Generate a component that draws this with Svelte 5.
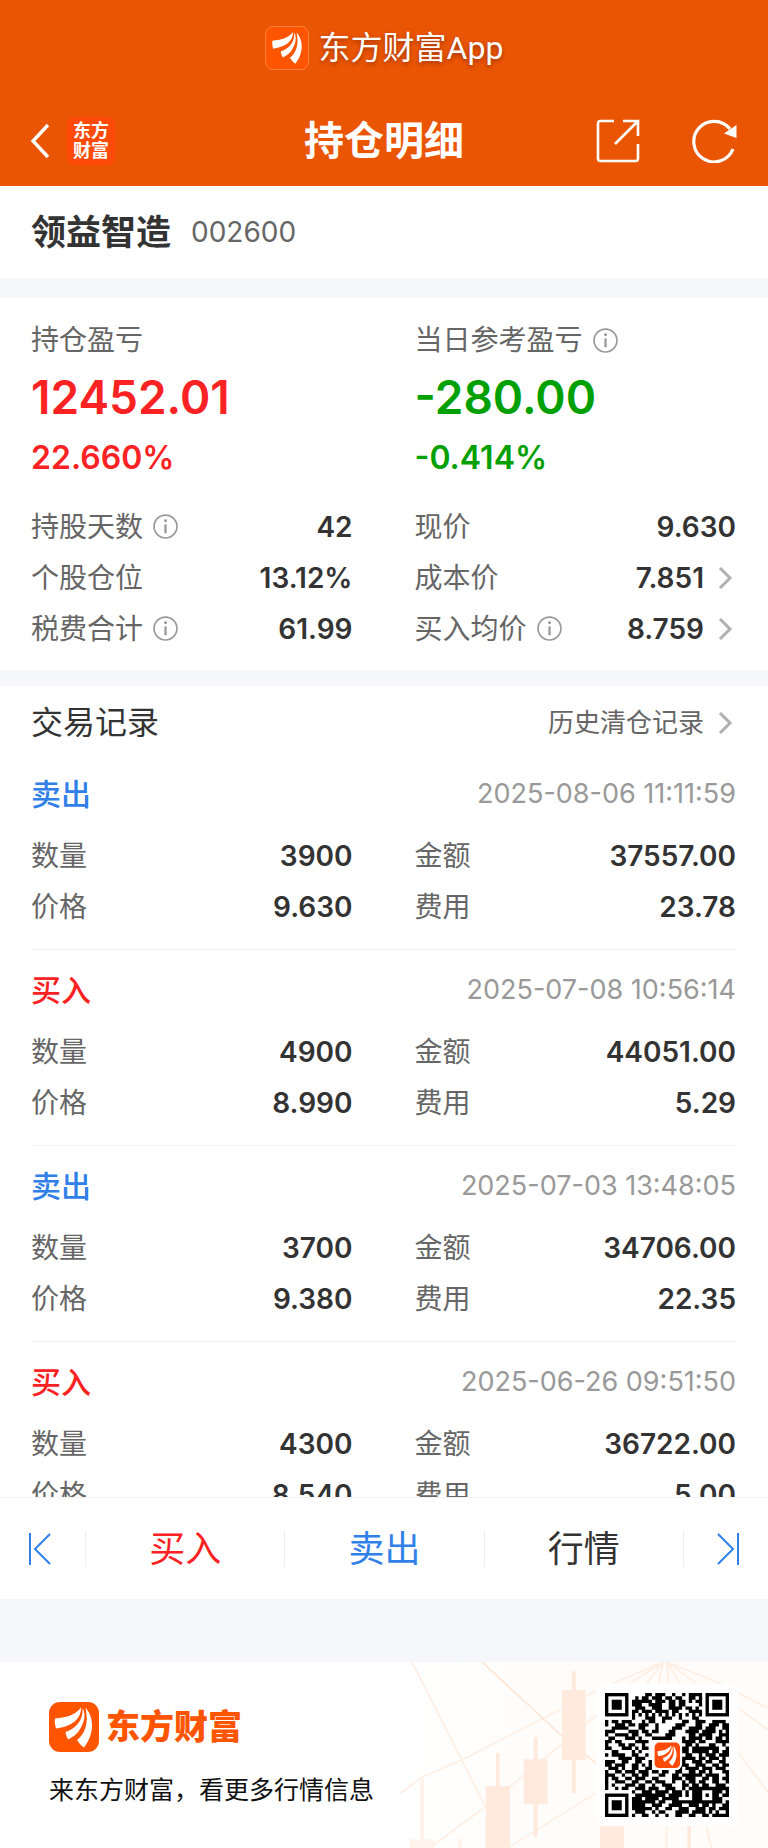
<script lang="ts">
  interface Trade {
    side: "buy" | "sell"
    time: string
    qty: string
    amount: string
    price: string
    fee: string
  }

  const sideText = { buy: "买入", sell: "卖出" }

  const stats = [
    { label: "持股天数", value: "42", info: true, more: false },
    { label: "现价", value: "9.630", info: false, more: false },
    { label: "个股仓位", value: "13.12%", info: false, more: false },
    { label: "成本价", value: "7.851", info: false, more: true },
    { label: "税费合计", value: "61.99", info: true, more: false },
    { label: "买入均价", value: "8.759", info: true, more: true },
  ]

  const trades: Trade[] = [
    { side: "sell", time: "2025-08-06 11:11:59", qty: "3900", amount: "37557.00", price: "9.630", fee: "23.78" },
    { side: "buy", time: "2025-07-08 10:56:14", qty: "4900", amount: "44051.00", price: "8.990", fee: "5.29" },
    { side: "sell", time: "2025-07-03 13:48:05", qty: "3700", amount: "34706.00", price: "9.380", fee: "22.35" },
    { side: "buy", time: "2025-06-26 09:51:50", qty: "4300", amount: "36722.00", price: "8.540", fee: "5.00" },
  ]

  const qr = [
    "1111111000001101110010010111100111111",
    "1000001001011011101101100110110100001",
    "1011101011111101110110110101100101101",
    "1011101011100111100110110000110101101",
    "1011101001110011100111101101000101101",
    "1000001011011101111011000111100100001",
    "1111111010101010101010101010101111111",
    "0000000010001110011100100011000000000",
    "1011011100010110010000011001110011110",
    "1001110110111001000001110001100111011",
    "0011111000110001000011100111101110011",
    "1110000111011011000110001111011110101",
    "1001111011001100001110000110111100111",
    "0110001110100011111100010111101101101",
    "1101100001111000000000011110110001111",
    "1000110110010000000000001101000110010",
    "1100011101011000000000111011111111001",
    "0011000010100000000000011011111011011",
    "1011110011001000000000101100101110111",
    "0000111101110000000000011110110111010",
    "1110011001100100000000110011101100110",
    "1101110011010100000000111001110011011",
    "0111010011001100000000101111011101110",
    "1001101110111011011001100110110100011",
    "1110010011011000110011011111101111001",
    "1011001101110011000011101110011011011",
    "1001110011001101110010010110110011001",
    "1010001110110010011100011011011001110",
    "1001011001110111001110010111111111111",
    "0000000010011101111011101011100011101",
    "1111111001111111110111101011101011011",
    "1000001011101111011111000011100011100",
    "1011101011111110110011111111111111101",
    "1011101011110011100111100111011010011",
    "1011101011111101001100111001110110111",
    "1000001001110010110001111011110101001",
    "1111111010011001001001100110011011111",
  ]

  // The corner finders are drawn over whatever the rows hold there.
  const finders = [
    [0, 0],
    [30, 0],
    [0, 30],
  ]

  const qrPath = qr
    .map((row, y) => [...row.matchAll(/1+/g)].map((m) => `M${m.index} ${y}h${m[0].length}v1h-${m[0].length}z`).join(""))
    .join("")
</script>

{#snippet petals()}
  <path d="M12 33C33 31 52 27 64 11C65 33 46 49 14 53C12 46 11 40 12 33Z" />
  <path d="M67 12C69 36 54 53 33 60C34 67 36 72 39 75C46 70 54 67 61 56C70 42 75 26 67 12Z" />
  <path d="M73 12C89 28 93 62 70 91C63 87 60 81 56 76C72 64 80 42 73 12Z" />
{/snippet}

{#snippet info()}
  <svg class="info" viewBox="0 0 24 24" aria-hidden="true">
    <circle cx="12" cy="12" r="11" fill="none" stroke="currentColor" stroke-width="1.6" />
    <circle cx="12" cy="6.5" r="1.4" fill="currentColor" />
    <path d="M12 10v8.5" stroke="currentColor" stroke-width="2.2" />
  </svg>
{/snippet}

{#snippet chevron()}
  <svg class="chevron" viewBox="0 0 32 24" aria-hidden="true">
    <path d="M16 2l10 10-10 10" fill="none" stroke="currentColor" stroke-width="3" />
  </svg>
{/snippet}

{#snippet cell(label: string, value: string)}
  <div class="cell">
    <dt>{label}</dt>
    <dd>{value}</dd>
  </div>
{/snippet}

<div class="page">
  <header>
    <div class="banner">
      <svg class="banner-logo" viewBox="0 0 100 100" aria-hidden="true">
        <rect x="1" y="1" width="98" height="98" rx="18" fill="#ff5500" stroke="#ff8a48" stroke-width="2" />
        <g fill="#fff" transform="translate(6 4) scale(.9)">{@render petals()}</g>
      </svg>
      <span>东方财富App</span>
    </div>
    <nav class="nav">
      <div class="nav-side">
        <button aria-label="返回">
          <svg width="20" height="36" viewBox="0 0 20 36">
            <path d="M18 2L3 18l15 16" fill="none" stroke="#fff" stroke-width="3.4" />
          </svg>
        </button>
        <span class="badge">东方<br />财富</span>
      </div>
      <h1>持仓明细</h1>
      <div class="nav-side end">
        <button aria-label="分享">
          <svg width="44" height="44" viewBox="0 0 44 44" fill="none" stroke="#fff" stroke-width="2.6">
            <path d="M18 2H4.5Q2 2 2 4.5V39.5Q2 42 4.5 42H39.5Q42 42 42 39.5V25" />
            <path d="M27 2h15v15M42 2L19 25" />
          </svg>
        </button>
        <button aria-label="刷新">
          <svg width="46" height="44" viewBox="0 0 46 44">
            <path d="M41 30A20.3 20.3 0 1 1 38 10" fill="none" stroke="#fff" stroke-width="3.2" />
            <path d="M44.5 6v13L32 14.5z" fill="#fff" />
          </svg>
        </button>
      </div>
    </nav>
  </header>

  <section class="stock">
    <h2>领益智造</h2>
    <span>002600</span>
  </section>

  <section class="position">
    <div class="pair">
      <div class="profit up">
        <p class="caption">持仓盈亏</p>
        <p class="big">12452.01</p>
        <p class="pct">22.660%</p>
      </div>
      <div class="profit down">
        <p class="caption">当日参考盈亏{@render info()}</p>
        <p class="big">-280.00</p>
        <p class="pct">-0.414%</p>
      </div>
    </div>
    <dl class="pair">
      {#each stats as s (s.label)}
        <div class="cell">
          <dt>{s.label}{#if s.info}{@render info()}{/if}</dt>
          <dd>{s.value}{#if s.more}{@render chevron()}{/if}</dd>
        </div>
      {/each}
    </dl>
  </section>

  <section class="records">
    <div class="records-head">
      <h3>交易记录</h3>
      <a href="#history">历史清仓记录{@render chevron()}</a>
    </div>
    {#each trades as t (t.time)}
      <article class="trade">
        <div class="trade-head">
          <strong class={t.side}>{sideText[t.side]}</strong>
          <time>{t.time}</time>
        </div>
        <dl class="pair">
          {@render cell("数量", t.qty)}
          {@render cell("金额", t.amount)}
          {@render cell("价格", t.price)}
          {@render cell("费用", t.fee)}
        </dl>
      </article>
    {/each}
  </section>

  <div class="actions">
    <button class="sell" aria-label="上一只">
      <svg width="24" height="32" viewBox="0 0 24 32" fill="none" stroke="currentColor" stroke-width="2">
        <path d="M2 0v32M22 1L7 16l15 15" />
      </svg>
    </button>
    <button class="buy">买入</button>
    <button class="sell">卖出</button>
    <button>行情</button>
    <button class="sell" aria-label="下一只">
      <svg width="24" height="32" viewBox="0 0 24 32" fill="none" stroke="currentColor" stroke-width="2">
        <path d="M22 0v32M2 1l15 15L2 31" />
      </svg>
    </button>
  </div>

  <footer>
    <svg class="candles" viewBox="0 66 1104 558" aria-hidden="true">
      <defs>
        <linearGradient id="warm">
          <stop offset="0" stop-color="#fff" />
          <stop offset=".5" stop-color="#fffcf9" />
          <stop offset="1" stop-color="#fffcf9" />
        </linearGradient>
      </defs>
      <rect y="66" width="1104" height="558" fill="url(#warm)" />
      <g fill="none" stroke="#ffeee2" stroke-width="5">
        <path d="M36 66L256 500M0 460L66 412L190 358L486 206L590 152M90 624L256 500M330 440L486 312L590 225M330 620L590 458" />
        <path d="M246 66L486 288L600 380" stroke="#ffe6d6" />
        <path d="M790 66L640 130M790 66L690 130M790 66L740 130M790 66L776 130M800 66L806 130M800 66L840 130M800 66L890 130M800 66L960 130L1104 205M1015 205L1104 270M1015 340L1104 455M800 555V624M918 555L934 624" />
      </g>
      <g fill="#ffeadd">
        <path d="M515 94h12v56h30v210h-30v100h-12V360h-29V150h29z" />
        <path d="M401 292h12v66h30v135h-30v98h-12v-98h-30V358h30z" />
        <path d="M288 338h11v100h31v186h-73V438h31z" />
        <path d="M600 555h72v69h-72zM862 555h11v69h-11z" />
      </g>
      <path d="M60 410h12v188h30v26H30v-26h30zM174 598h11v26h-11z" fill="#fff3eb" />
    </svg>
    <div class="brand">
      <div class="brand-name">
        <svg width="50" height="50" viewBox="0 0 100 100" aria-hidden="true">
          <rect width="100" height="100" rx="22" fill="#ff5500" />
          <g fill="#fff">{@render petals()}</g>
        </svg>
        <strong>东方财富</strong>
      </div>
      <p>来东方财富，看更多行情信息</p>
    </div>
    <div class="qr">
      <svg viewBox="0 0 37 37" role="img" aria-label="二维码">
        <path d={qrPath} />
        {#each finders as [x, y] (`${x}-${y}`)}
          <rect x={x === 30 ? 29 : 0} y={y === 30 ? 29 : 0} width="8" height="8" fill="#fff" />
          <rect x={x + 0.5} y={y + 0.5} width="6" height="6" fill="#fff" stroke="#000" />
          <rect x={x + 2} y={y + 2} width="3" height="3" />
        {/each}
        <rect x="14.2" y="14.2" width="8.8" height="8.8" rx="1.8" fill="#fff" />
        <rect x="14.8" y="14.8" width="7.6" height="7.6" rx="1.4" fill="#ff4a0a" />
        <g fill="#fff" transform="translate(14.8 14.8) scale(.076)">{@render petals()}</g>
      </svg>
    </div>
  </footer>
</div>

<style>
  :global(body) {
    margin: 0;
    background: #f6f7fa;
  }
  .page {
    display: flex;
    flex-direction: column;
    height: 100vh;
    color: #333;
    font-family: Inter, "Noto Sans CJK SC", sans-serif;
    font-size: 28px;
    line-height: 36px;
  }
  .page > * {
    flex-shrink: 0;
  }
  h1,
  h2,
  h3,
  p,
  dl,
  dd {
    margin: 0;
  }
  button {
    display: flex;
    align-items: center;
    justify-content: center;
    padding: 0;
    border: 0;
    background: none;
    color: inherit;
    font: inherit;
    cursor: pointer;
  }
  svg {
    display: block;
  }

  header {
    background: #ea5504;
    color: #fff;
  }
  .banner {
    display: flex;
    align-items: center;
    justify-content: center;
    gap: 10px;
    height: 96px;
    font-family: Roboto, "Noto Sans CJK SC", sans-serif;
    font-size: 32px;
    text-shadow: 0 2px 4px rgba(80, 20, 0, 0.5);
  }
  .banner-logo {
    width: 44px;
    height: 44px;
  }
  .nav {
    display: grid;
    grid-template-columns: 1fr auto 1fr;
    align-items: center;
    height: 90px;
    padding: 0 30px;
  }
  .nav-side {
    display: flex;
    align-items: center;
    gap: 17px;
  }
  .nav-side.end {
    justify-content: flex-end;
    gap: 52px;
  }
  .badge {
    width: 48px;
    padding: 4px 0;
    border-radius: 8px;
    background: #ff4a0a;
    font-size: 18px;
    font-weight: 700;
    line-height: 20px;
    text-align: center;
  }
  h1 {
    font-size: 40px;
    font-weight: 700;
    line-height: 48px;
  }

  .stock {
    display: flex;
    align-items: center;
    gap: 20px;
    height: 92px;
    padding: 0 31px;
    background: #fff;
    color: #666;
  }
  h2 {
    color: #333;
    font-size: 35px;
    font-weight: 700;
  }

  .position {
    margin: 20px 0 16px;
    padding: 24px 32px 16px 31px;
    background: #fff;
  }
  .pair {
    display: grid;
    grid-template-columns: 1fr 1fr;
    column-gap: 62px;
  }
  .profit {
    padding-bottom: 21px;
  }
  .caption {
    display: flex;
    align-items: center;
    color: #666;
  }
  .big {
    font-size: 46px;
    font-weight: 600;
    line-height: 78px;
  }
  .pct {
    font-size: 32px;
    font-weight: 600;
    line-height: 44px;
  }
  .up,
  .buy {
    color: #fa2222;
  }
  .down {
    color: #00a000;
  }
  .sell {
    color: #3080e8;
  }
  .info {
    width: 25px;
    height: 25px;
    margin-left: 10px;
    color: #999;
  }
  .chevron {
    width: 32px;
    height: 24px;
    color: #b0b0b0;
  }
  .cell {
    display: flex;
    align-items: center;
    justify-content: space-between;
    height: 51px;
  }
  dt,
  dd {
    display: flex;
    align-items: center;
  }
  dt {
    color: #666;
  }
  dd {
    font-weight: 600;
  }

  .page > .records {
    flex: 1 1 0;
    min-height: 0;
    overflow: auto;
    scrollbar-width: none;
    padding: 0 32px 0 31px;
    background: #fff;
  }
  .records-head,
  .trade-head {
    display: flex;
    align-items: center;
    justify-content: space-between;
  }
  .records-head {
    height: 62px;
    padding-top: 6px;
  }
  h3 {
    font-size: 32px;
    font-weight: 400;
  }
  .records-head a {
    display: flex;
    align-items: center;
    color: #666;
    font-size: 26px;
    text-decoration: none;
  }
  .trade {
    padding-bottom: 17px;
    border-bottom: 1px solid #f0f0f0;
  }
  .trade-head {
    height: 72px;
    padding-top: 4px;
  }
  .trade-head strong {
    font-size: 30px;
    font-weight: 500;
  }
  .trade-head time {
    color: #999;
    font-size: 27px;
  }

  .actions {
    display: grid;
    grid-template-columns: 85px 1fr 1fr 1fr 85px;
    align-items: center;
    height: 101px;
    border-top: 1px solid #f3f3f3;
    background: #fff;
    font-size: 36px;
  }
  .actions button {
    height: 36px;
  }
  .actions button + button {
    border-left: 1px solid #eee;
  }
  .actions button:first-child {
    padding-right: 5px;
  }
  .actions button:last-child {
    padding-left: 4px;
  }

  footer {
    position: relative;
    display: flex;
    align-items: center;
    justify-content: space-between;
    height: 186px;
    margin-top: 63px;
    padding: 0 30px 0 49px;
    background: #fff;
    color: #111;
  }
  .candles {
    position: absolute;
    top: 0;
    right: 0;
    height: 100%;
  }
  .brand,
  .qr {
    position: relative;
  }
  .brand-name {
    display: flex;
    align-items: center;
    gap: 7px;
    margin-bottom: 20px;
  }
  .brand-name strong {
    color: #ff5500;
    font-size: 34px;
    font-weight: 900;
  }
  .brand p {
    font-size: 25px;
  }
  .qr {
    box-sizing: border-box;
    width: 142px;
    padding: 9px;
    border-radius: 6px;
    background: #fff;
  }
</style>
